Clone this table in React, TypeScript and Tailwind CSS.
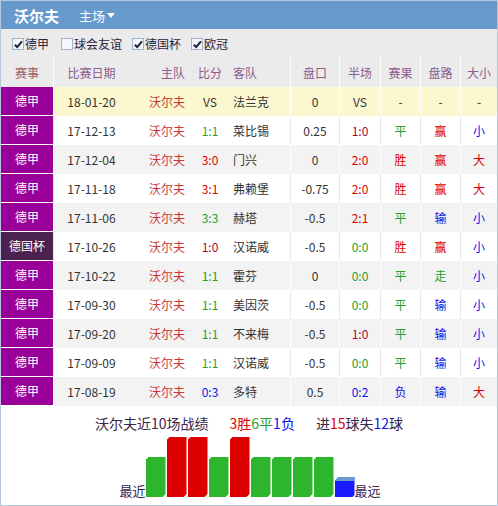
import React from "react";

type Row = {
  lg: string;
  date: string;
  score: string;
  sc: string;
  away: string;
  pk: string;
  half: string;
  hc: string;
  res: string;
  rc: string;
  road: string;
  roc: string;
  dx: string;
  dc: string;
};

const G = "text-[#2a9d2a]";
const R = "text-[#e00000]";
const B = "text-[#1010ee]";
const D = "text-[#333]";
const M = "text-[#b0003a]";

const rows: Row[] = [
  { lg: "德甲", date: "18-01-20", score: "VS", sc: D, away: "法兰克", pk: "0", half: "VS", hc: D, res: "-", rc: D, road: "-", roc: D, dx: "-", dc: D },
  { lg: "德甲", date: "17-12-13", score: "1:1", sc: G, away: "菜比锡", pk: "0.25", half: "1:0", hc: M, res: "平", rc: G, road: "赢", roc: R, dx: "小", dc: B },
  { lg: "德甲", date: "17-12-04", score: "3:0", sc: R, away: "门兴", pk: "0", half: "2:0", hc: R, res: "胜", rc: R, road: "赢", roc: R, dx: "大", dc: R },
  { lg: "德甲", date: "17-11-18", score: "3:1", sc: R, away: "弗赖堡", pk: "-0.75", half: "2:0", hc: R, res: "胜", rc: R, road: "赢", roc: R, dx: "大", dc: R },
  { lg: "德甲", date: "17-11-06", score: "3:3", sc: G, away: "赫塔", pk: "-0.5", half: "2:1", hc: R, res: "平", rc: G, road: "输", roc: B, dx: "小", dc: B },
  { lg: "德国杯", date: "17-10-26", score: "1:0", sc: M, away: "汉诺威", pk: "-0.5", half: "0:0", hc: G, res: "胜", rc: R, road: "赢", roc: R, dx: "小", dc: B },
  { lg: "德甲", date: "17-10-22", score: "1:1", sc: G, away: "霍芬", pk: "0", half: "0:0", hc: G, res: "平", rc: G, road: "走", roc: G, dx: "小", dc: B },
  { lg: "德甲", date: "17-09-30", score: "1:1", sc: G, away: "美因茨", pk: "-0.5", half: "0:0", hc: G, res: "平", rc: G, road: "输", roc: B, dx: "小", dc: B },
  { lg: "德甲", date: "17-09-20", score: "1:1", sc: G, away: "不来梅", pk: "-0.5", half: "1:0", hc: M, res: "平", rc: G, road: "输", roc: B, dx: "小", dc: B },
  { lg: "德甲", date: "17-09-09", score: "1:1", sc: G, away: "汉诺威", pk: "-0.5", half: "0:0", hc: G, res: "平", rc: G, road: "输", roc: B, dx: "小", dc: B },
  { lg: "德甲", date: "17-08-19", score: "0:3", sc: B, away: "多特", pk: "0.5", half: "0:2", hc: B, res: "负", rc: B, road: "输", roc: B, dx: "大", dc: R },
];

const bars: ("g" | "r" | "b")[] = ["g", "r", "r", "g", "r", "g", "g", "g", "g", "b"];

function Check({ checked }: { checked: boolean }) {
  return (
    <span className="relative inline-block w-[12px] h-[12px] border border-[#9fb4cb] bg-[#f4f6f9] mr-[1px]">
      {checked && (
        <svg viewBox="0 0 12 12" className="absolute left-[0px] top-[0px] w-[11px] h-[11px]">
          <path d="M2 6.2 L4.6 8.8 L9.8 2.6" stroke="#1f1f3f" strokeWidth="2.2" fill="none" />
        </svg>
      )}
    </span>
  );
}

export default function App() {
  const font = { fontFamily: '"Noto Sans CJK SC", "Noto Sans", sans-serif' };
  return (
    <div
      className="w-[498px] h-[506px] border border-[#b7c7d9] bg-white overflow-hidden text-[12px] text-[#333]"
      style={font}
    >
      {/* title bar */}
      <div className="h-[28px] bg-[#6699cc] flex items-center text-white">
        <span className="ml-[13px] font-bold text-[15px] leading-none">沃尔夫</span>
        <span className="ml-[20px] text-[13px] leading-none flex items-center">
          主场
          <svg viewBox="0 0 8 5" className="w-[8px] h-[5px] ml-[2px]">
            <path d="M0 0 L8 0 L4 5 Z" fill="#fff" />
          </svg>
        </span>
      </div>

      {/* filter row */}
      <div className="h-[29px] bg-[#ebebeb] flex items-center pl-[11px] text-[12px] text-[#2d1f3d]">
        <label className="flex items-center">
          <Check checked />
          德甲
        </label>
        <label className="flex items-center ml-[12px]">
          <Check checked={false} />
          球会友谊
        </label>
        <label className="flex items-center ml-[10px]">
          <Check checked />
          德国杯
        </label>
        <label className="flex items-center ml-[10px]">
          <Check checked />
          欧冠
        </label>
      </div>

      {/* table header */}
      <div className="h-[29px] bg-[#ebebeb] grid grid-cols-[52px_76px_59px_44px_58px_49px_41px_40px_40px_37px] items-stretch text-[#8c5c8c]">
        <div className="flex items-center justify-center text-[#9a5d62]">赛事</div>
        <div className="flex items-center justify-center border-l border-white">比赛日期</div>
        <div className="flex items-center justify-end pr-[3px]">主队</div>
        <div className="flex items-center justify-center">比分</div>
        <div className="flex items-center pl-[1px]">客队</div>
        <div className="flex items-center justify-center border-l border-white">盘口</div>
        <div className="flex items-center justify-center border-l border-white">半场</div>
        <div className="flex items-center justify-center border-l border-white">赛果</div>
        <div className="flex items-center justify-center border-l border-white">盘路</div>
        <div className="flex items-center justify-center border-l border-white">大小</div>
      </div>

      {/* rows */}
      {rows.map((r, i) => {
        const bg = i === 0 ? "bg-[#fbf7cf]" : i % 2 === 1 ? "bg-white" : "bg-[#f3f3f3]";
        const dv = i % 2 === 1 ? "border-[#e8e8e8]" : "border-white";
        const cup = r.lg === "德国杯";
        return (
          <div
            key={i}
            className={`h-[29px] grid grid-cols-[52px_76px_59px_44px_58px_49px_41px_40px_40px_37px] ${bg}`}
          >
            <div
              className={`flex items-center justify-center text-white border-b border-white ${
                cup ? "bg-[#4b2150]" : "bg-[#990099]"
              }`}
            >
              {r.lg}
            </div>
            <div className={`flex items-center justify-center border-l ${dv} text-[#333]`}>{r.date}</div>
            <div className="flex items-center justify-end pr-[3px] text-[#cc3333]">沃尔夫</div>
            <div className={`flex items-center justify-center ${r.sc}`}>{r.score}</div>
            <div className="flex items-center pl-[1px] text-[#333]">{r.away}</div>
            <div className={`flex items-center justify-center border-l ${dv} text-[#333]`}>{r.pk}</div>
            <div className={`flex items-center justify-center border-l ${dv} ${r.hc}`}>{r.half}</div>
            <div className={`flex items-center justify-center border-l ${dv} ${r.rc}`}>{r.res}</div>
            <div className={`flex items-center justify-center border-l ${dv} ${r.roc}`}>{r.road}</div>
            <div className={`flex items-center justify-center border-l ${dv} ${r.dc}`}>{r.dx}</div>
          </div>
        );
      })}

      {/* summary */}
      <div className="pt-[8px]">
        <div className="h-[18px] flex items-center justify-center gap-[21px] text-[14px] leading-[18px] text-[#3a2448]">
          <span>沃尔夫近10场战绩</span>
          <span>
            <span className="text-[#e00000]">3胜</span>
            <span className="text-[#2a9d2a]">6平</span>
            <span className="text-[#1010ee]">1负</span>
          </span>
          <span>
            进<span className="text-[#e00000]">15</span>球失<span className="text-[#1010ee]">12</span>球
          </span>
        </div>
        <div className="mt-[4px] h-[61px] flex items-end justify-center pl-[2px]">
          <span className="text-[13px] leading-[14px] text-[#3a2448] mb-[-1px]">最近</span>
          <div className="flex items-end gap-[1px]">
            {bars.map((b, i) => {
              if (b === "b") {
                return (
                  <div
                    key={i}
                    className="w-[20px] h-[20px] bg-[#1a1aff] flex flex-col [clip-path:polygon(4px_0,100%_0,100%_calc(100%_-_2px),calc(100%_-_2px)_100%,0_100%,0_4px)]"
                  >
                    <div className="h-[4px] bg-[#6a9ad2]" />
                  </div>
                );
              }
              return (
                <div
                  key={i}
                  className={`w-[20px] ${b === "g" ? "h-[40px] bg-[#2db52d]" : "h-[60px] bg-[#dd0000]"} [clip-path:polygon(3px_0,100%_0,100%_calc(100%_-_3px),calc(100%_-_3px)_100%,0_100%,0_3px)]`}
                />
              );
            })}
          </div>
          <span className="text-[13px] leading-[14px] text-[#3a2448] mb-[-1px]">最远</span>
        </div>
      </div>
    </div>
  );
}
